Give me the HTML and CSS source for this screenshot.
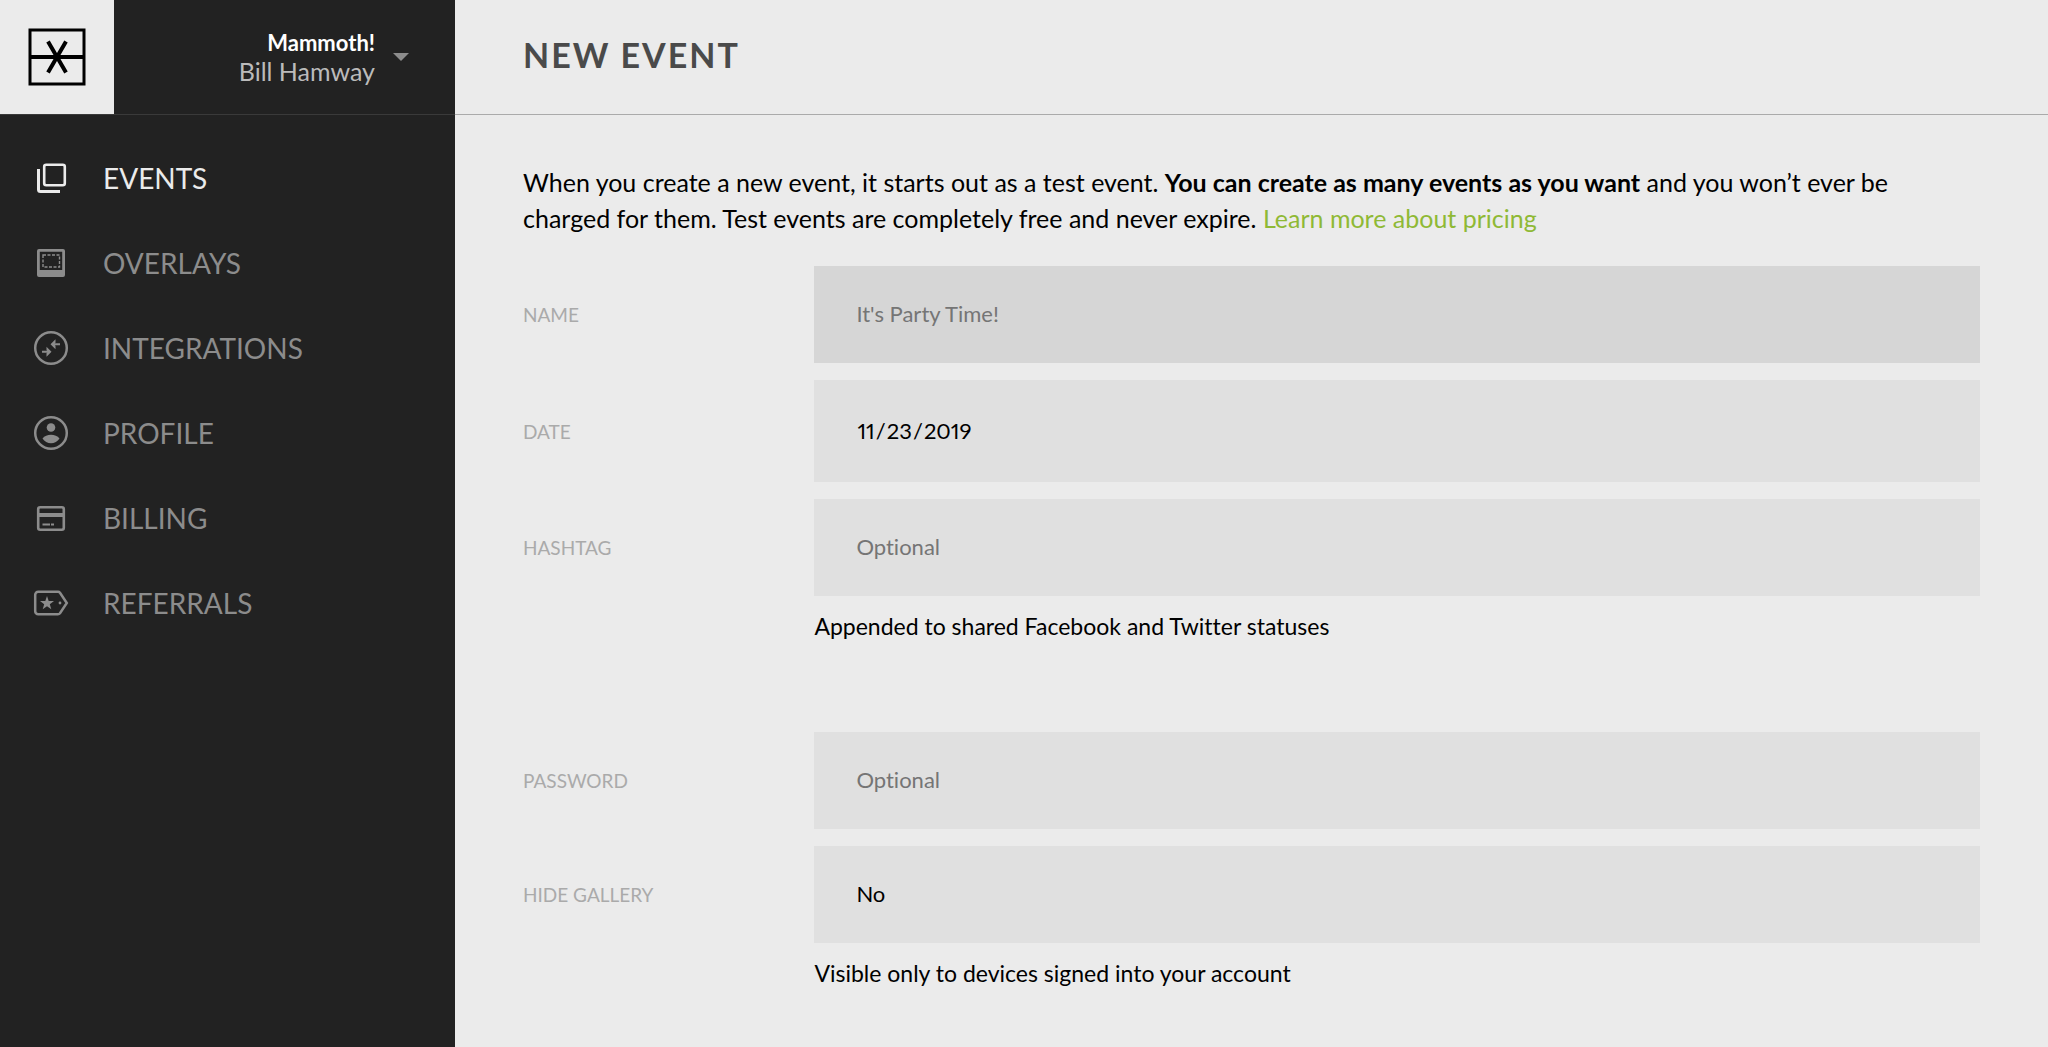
FILE: index.html
```html
<!DOCTYPE html>
<html lang="en">

<head>
    <meta charset="UTF-8">
    <meta name="viewport" content="width=device-width, initial-scale=1.0">
    <title>New Event</title>
    <link rel="stylesheet" href="styles.css">
</head>

<body>
    <aside class="sidebar">
        <div class="account">
            <a href="#" class="logo" aria-label="Home">
                <svg viewBox="0 0 58 58" fill="none" stroke="#000">
                    <rect x="2" y="2" width="54" height="54" stroke-width="3" />
                    <path d="M2 29h54" stroke-width="4" />
                    <path d="M20 13.5l18 31M38 13.5l-18 31" stroke-width="4" />
                </svg>
            </a>
            <button type="button" class="account-button">
                <span class="account-text">
                    <span class="account-company">Mammoth!</span>
                    <span class="account-name">Bill Hamway</span>
                </span>
                <span class="caret"></span>
            </button>
        </div>
        <nav class="nav">
            <a href="#" class="nav-link active">
                <svg viewBox="0 0 36 36" fill="none" stroke="currentColor">
                    <rect x="11.2" y="4.7" width="20.6" height="20.6" rx="2" stroke-width="2.6" />
                    <path d="M5.5 9v20.5a2 2 0 0 0 2 2H27" stroke-width="3" />
                </svg>
                Events
            </a>
            <a href="#" class="nav-link">
                <svg viewBox="0 0 36 36" fill="none" stroke="currentColor">
                    <path d="M6 4h24a2 2 0 0 1 2 2v24a2 2 0 0 1-2 2H6a2 2 0 0 1-2-2V6a2 2 0 0 1 2-2zM6.8 6.8V25h22.4V6.8z" fill="currentColor" fill-rule="evenodd" stroke="none" />
                    <rect x="10" y="10" width="16.5" height="12" stroke-width="1.4" stroke-dasharray="3 1.5" />
                </svg>
                Overlays
            </a>
            <a href="#" class="nav-link">
                <svg viewBox="0 0 36 36" fill="none" stroke="currentColor">
                    <circle cx="18" cy="18" r="15.8" stroke-width="2.5" />
                    <path d="M27 14.3H21M9 21.7h6" stroke-width="2" />
                    <path d="M17.5 14.3l5-5v3.5l-1.5 1.5 1.5 1.5v3.5zM18.5 21.7l-5-5v3.5l1.5 1.5-1.5 1.5v3.5z" fill="currentColor" stroke="none" />
                </svg>
                Integrations
            </a>
            <a href="#" class="nav-link">
                <svg viewBox="0 0 36 36" fill="currentColor">
                    <circle cx="18" cy="18" r="15.8" fill="none" stroke="currentColor" stroke-width="2.5" />
                    <circle cx="18" cy="12.5" r="4.3" />
                    <path d="M9.5 23.5c2-2.5 5-3.7 8.5-3.7s6.5 1.2 8.5 3.7c-2 3-5 4.7-8.5 4.7s-6.5-1.7-8.5-4.7z" />
                </svg>
                Profile
            </a>
            <a href="#" class="nav-link">
                <svg viewBox="0 0 36 36" fill="none" stroke="currentColor">
                    <rect x="5.2" y="7.2" width="25.6" height="22.6" rx="2" stroke-width="2.6" />
                    <path d="M5 15h26" stroke-width="4" />
                    <path d="M9.5 24.5h7.5M18 24.5h3" stroke-width="1.8" />
                </svg>
                Billing
            </a>
            <a href="#" class="nav-link">
                <svg viewBox="0 0 36 36" fill="currentColor">
                    <path d="M5.2 6.7H25q1.2 0 2 1L33.8 18 27 28.3q-.8 1-2 1H5.2a3 3 0 0 1-3-3V9.7a3 3 0 0 1 3-3z" fill="none" stroke="currentColor" stroke-width="2.5" />
                    <path d="M14 11l1.7 4.9 5.3.1-4.2 3.2 1.5 5L14 21.2l-4.300 3 1.500-5L7 16l5.300-.1z" />
                    <circle cx="27" cy="18" r="1.4" />
                </svg>
                Referrals
            </a>
        </nav>
    </aside>

    <main class="main">
        <header class="header">
            <h1>New Event</h1>
        </header>
        <form class="content">
            <p class="intro">When you create a new event, it starts out as a test event. <strong>You can create as many events as you want</strong> and you won’t ever be charged for them. Test events are completely free and never expire. <a href="#">Learn more about pricing</a></p>
            <div class="form-group">
                <label for="eventName">Name</label>
                <input type="text" id="eventName" class="current" placeholder="It's Party Time!">
            </div>
            <div class="form-group">
                <label for="eventDate">Date</label>
                <input type="date" id="eventDate" value="2019-11-23">
            </div>
            <div class="form-group">
                <label for="hashtag">Hashtag</label>
                <input type="text" id="hashtag" placeholder="Optional">
                <p class="help">Appended to shared Facebook and Twitter statuses</p>
            </div>
            <div class="form-group">
                <label for="password">Password</label>
                <input type="text" id="password" placeholder="Optional">
            </div>
            <div class="form-group">
                <label for="hideGallery">Hide Gallery</label>
                <select id="hideGallery">
                    <option value="no">No</option>
                    <option value="yes">Yes</option>
                </select>
                <p class="help">Visible only to devices signed into your account</p>
            </div>
        </form>
    </main>
</body>

</html>
```

FILE: styles.css
```css
* {
    box-sizing: border-box;
}

body {
    margin: 0;
    min-height: 100vh;
    display: flex;
    background-color: #ebebeb;
    color: #000;
    font-family: Lato, "Open Sans", sans-serif;
    font-size: 22px;
    font-variant-ligatures: none;
}

.sidebar {
    flex: 0 0 455px;
    background-color: #222;
}

.account {
    display: flex;
    height: 115px;
    border-bottom: 1px solid #3a3a3a;
}

.logo {
    flex: 0 0 114px;
    display: flex;
    align-items: center;
    justify-content: center;
    background-color: #ebebeb;
}

.logo svg {
    width: 58px;
    height: 58px;
}

.account-button {
    flex: 1;
    display: flex;
    align-items: center;
    justify-content: flex-end;
    gap: 18px;
    padding: 0 46px 0 0;
    border: none;
    background: none;
    font-family: inherit;
    text-align: right;
    cursor: pointer;
}

.account-text span {
    display: block;
    line-height: 28px;
}

.account-company {
    color: #fff;
    font-size: 22px;
    font-weight: 700;
}

.account-name {
    color: #bbb;
    font-size: 25px;
}

.caret {
    border: 8px solid transparent;
    border-top-color: #8c8c8c;
    border-bottom: none;
}

.nav {
    padding-top: 20px;
}

.nav-link {
    display: flex;
    align-items: center;
    gap: 34px;
    height: 85px;
    padding-left: 33px;
    color: #8c8c8c;
    font-size: 28px;
    text-decoration: none;
    text-transform: uppercase;
}

.nav-link.active,
.nav-link:hover {
    color: #ebebeb;
}

.nav-link svg {
    width: 36px;
    height: 36px;
}

.main {
    flex: 1;
    min-width: 0;
}

.header {
    display: flex;
    align-items: center;
    height: 115px;
    padding: 0 68px 5px;
    border-bottom: 1px solid #aaa;
}

h1 {
    margin: 0;
    color: #4a4a4a;
    font-size: 34px;
    font-weight: 700;
    letter-spacing: 2px;
    text-transform: uppercase;
}

.content {
    padding: 49px 68px 0;
}

.intro {
    margin: 0 0 30px;
    font-size: 25px;
    line-height: 36px;
}

.intro a {
    color: #8fb935;
    text-decoration: none;
}

.form-group {
    display: grid;
    grid-template-columns: 20% 1fr;
    align-items: center;
    margin-bottom: 17px;
}

.form-group label {
    color: #aaa;
    font-size: 19px;
    text-transform: uppercase;
}

.form-group input,
.form-group select {
    width: 100%;
    height: 97px;
    padding: 0 42px 2px;
    border: none;
    border-radius: 0;
    background-color: #e0e0e0;
    color: #000;
    font-family: inherit;
    font-size: 22px;
    font-variant-ligatures: none;
    appearance: none;
}

.form-group input[type="date"] {
    height: 102px;
}

.form-group input[type="date"]::-webkit-datetime-edit {
    font-variant-numeric: proportional-nums;
}

.form-group input[type="date"]::-webkit-calendar-picker-indicator {
    display: none;
}

.form-group .current,
.form-group input:focus,
.form-group select:focus {
    background-color: #d6d6d6;
    outline: none;
}

.form-group ::placeholder {
    color: #757575;
}

.help {
    grid-column: 2;
    margin: 12px 0 71px;
    font-size: 23px;
    line-height: 36px;
}
```
